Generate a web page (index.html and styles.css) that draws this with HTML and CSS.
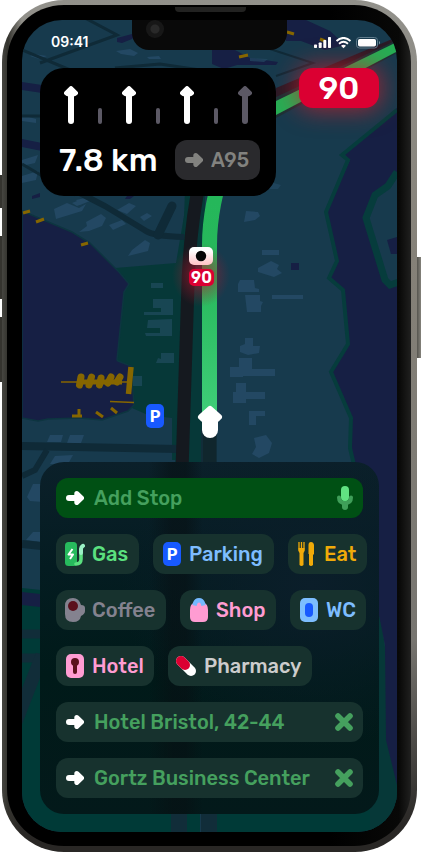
FILE: index.html
```html
<!DOCTYPE html>
<html lang="en">
<head>
<meta charset="utf-8">
<title>Navigation</title>
<link rel="stylesheet" href="styles.css">
</head>
<body>
<svg class="defs" width="0" height="0">
  <symbol id="go" viewBox="0 0 18 14"><path d="M3 7H12" stroke="currentColor" stroke-width="6" stroke-linecap="round"/><path d="M10.800 2.500L15.500 7L10.800 11.500Z" fill="currentColor" stroke="currentColor" stroke-width="5" stroke-linejoin="round"/></symbol>
  <symbol id="lane" viewBox="0 0 14 38"><path d="M7 5V35" stroke="currentColor" stroke-width="6" stroke-linecap="round"/><path d="M7 2.300L11.800 7L10.500 8H3.500L2.200 7Z" fill="currentColor" stroke="currentColor" stroke-width="4.400" stroke-linejoin="round"/></symbol>
  <symbol id="close" viewBox="0 0 18 18"><path d="M3 3L15 15M15 3L3 15" stroke="currentColor" stroke-width="5.600" stroke-linecap="round"/></symbol>
</svg>
<div class="device">
  <i class="key mute"></i><i class="key up"></i><i class="key down"></i><i class="key power"></i>
  <div class="bezel">
    <i class="speaker"></i>
    <main class="screen">
      <svg class="map" viewBox="22 20 375 812" width="375" height="812">
        <defs>
          <linearGradient id="route" gradientUnits="userSpaceOnUse" x1="0" y1="200" x2="0" y2="420"><stop offset="0" stop-color="#25b75a"/><stop offset=".35" stop-color="#27b85c"/><stop offset="1" stop-color="#40cf79"/></linearGradient>
          <radialGradient id="glow"><stop offset="0" stop-color="#d20b2e" stop-opacity=".75"/><stop offset=".45" stop-color="#b0182e" stop-opacity=".4"/><stop offset="1" stop-color="#8a2030" stop-opacity="0"/></radialGradient>
          <linearGradient id="cam" x1="0" y1="0" x2="0" y2="1"><stop offset=".2" stop-color="#fff"/><stop offset="1" stop-color="#ffc1c4"/></linearGradient>
        </defs>
        <rect x="22" y="20" width="375" height="812" fill="#173a4d"/>
        <!-- parks -->
        <path d="M115 268L176 263L190 180L202 180L206 460H172V418L148 415L132 408L110 400Z" fill="#063838"/>
        <path d="M185 190h20v280h-30z" fill="#063838"/>
        <path d="M22 588L60 592L200 600V832H22Z" fill="#003a37"/>
        <path d="M215 832V640H380L397 780V832Z" fill="#003a37"/>
        <path d="M378 600L384 640L388 670V740L397 780V832H370V600Z" fill="#063838"/>
        <!-- bay -->
        <path d="M22 211L72 232L90 243L119 272L129 284L124 292L117 360L118 361L131 366L134 405L128 411L102 420L80 418L48 419L38 421L22 418Z" fill="#161f44" stroke="#0d3540" stroke-width="1.5"/>
        <!-- eastern river -->
        <path d="M397 108L344 154L350 160L326 212L338 261L329 278L344 291L349 344L331 372L352 418L351 448L365 500L376 600L385 645L386 740L397 785Z" fill="#161f44"/>
        <path d="M397 110L342 155L348 160L326 212L337 261L329 278L343 290L348 344L331 372L351 418L350 448L354 465" fill="none" stroke="#063c3c" stroke-width="4"/>
        <path d="M397 172L388 188L375 195L366 218L385 281L392 285L397 283Z" fill="#173a4d"/>
        <path d="M397 172L388 186L375 195L366 218L385 280L390 285L399 282" fill="none" stroke="#063c3c" stroke-width="7"/>
        <path d="M387 240L397 237V254L391 254Z" fill="#161f44"/>
        <!-- northern water -->
        <path d="M286 20H306L330 31L345 45L325 50L301 41H286ZM212 50H235L250 58L278 62L276 65L237 65L224 69L212 64ZM22 82L42 85V93L22 90ZM22 139L42 143V151L22 147ZM117 38L132 34L136 35L132 39L122 43L117 42ZM32 196L40 193V197L32 199ZM127 196H134L130 199H125ZM22 592L40 594V607L22 605ZM305 287" fill="#161f44"/>
        <rect x="291" y="263" width="8" height="7" fill="#161f44"/>
        <!-- buildings -->
        <g fill="#234863">
          <path d="M116 51l14-2 8 4-4 3-13-2zM62 41l19 3-4 2-17-2zM34 54l13 2-8 3-9-3zM147 57l12-1 2 3-12 0zM22 115l14 4 0 4-14-2zM22 160l16-5-3 8-13 3zM22 176l16-5-2 9-14 3zM54 209l13-6 12 5 7-4-4 7-13 4-13 4zM72 203l10-4 3 4-8 3zM117 210l12-7 7 3-9 8zM86 222l15-8 5 4-4 8-13 5-10 1 8-6zM109 225l13-5 4 4-13 6zM140 217l7-4 5 3-8 5zM132 250l13-10 5 3-2 8-20 5zM76 200l9-2 5 3-10 4z"/>
          <path d="M246 211l12 1 2 4-5 4-11 2zM262 250h17v5h-17zM258 268l13-7 8 4-2 4 5 4-8 4-16-5zM238 284l2-4h14l1 8 4 1v3h-21zM245 295h15v6l3 1-2 4v6h-14zM272 295h31v4h-31zM240 346l5-2v-6h8v8h7l-1 7-11 2-8-3zM230 367h9v-9h13v11h23v7h-32v1h-13zM233 392h3v-9h10v9h19v7h-19v4h-13zM249 411h16v5h-9v9h-7zM254 438l12-3 6 8-3 10-10 5-7-4 4-7z"/>
          <path d="M50 435h13l-2 7H47zM70 435h14l-3 8H67zM55 456l18-1-5 9H50z"/>
          <path d="M27 497l6-13h10v18l-13-1zM26 540l7-8h8v10z"/>
          <path d="M250 58l18 1-4 3-14-1zM266 181l15 4-3 4h-14z" opacity=".7"/>
        </g>
        <g fill="#184653"><path d="M151 283h12v5h-12zM153 299h20v16h-29v-3h17v-4h-8zM148 320l24-1v17h-26l-1-3h15v-5h-13zM161 353h13v10h-18l2-5 3 1zM133 376h9v10h-9z"/></g>
        <!-- streets -->
        <g fill="none" stroke="#0f2a37">
          <path d="M85 18L117 35L40 63M22 50L75 72M115 68L160 64L200 70" stroke-width="3"/>
          <path d="M22 116H42M22 164L75 195" stroke-width="3"/>
          <path d="M74 190L105 206L146 231Q153 236 184 237" stroke-width="6"/><path d="M158 235L172 206" stroke-width="9" stroke-linecap="round"/>
          <path d="M22 446L178 449" stroke-width="8"/><path d="M47 450L35 470L22 476" stroke-width="6"/>
          <path d="M22 544L60 548" stroke-width="8"/>
          <path d="M270 49L313 63L276 76" stroke-width="2"/>
        </g>
        <g stroke="#112d39" fill="none"><path d="M22 634H42M22 658H42" stroke-width="9"/><path d="M42 655L16 722" stroke-width="13"/><path d="M179 470V832" stroke-width="16"/><path d="M209 430V832" stroke-width="16"/></g>
        <!-- carriageways -->
        <path d="M200 180Q189 230 187.500 300L182 470" fill="none" stroke="#15191f" stroke-width="13"/>
        <path d="M276 88L397 37V44L276 98Z" fill="#2a1a26"/>
        <path d="M276 97L397 40V53L276 118Z" fill="#1c3035"/>
        <path d="M276 101L397 42V51.500L276 115Z" fill="#26ae54"/>
        <path d="M226 160Q209.500 205 209.500 245V422" fill="none" stroke="url(#route)" stroke-width="15"/>
        <path d="M203 433h13v37h-13z" fill="#10262d"/>
        <!-- piers -->
        <g fill="none" stroke="#866600"><path d="M61 382H128M110 401.500L134 402.500" stroke-width="1.600"/><path d="M131 367L128.500 394" stroke-width="5.500"/><path d="M81 377l-1.500 8M91.500 377l-2.500 8M101 378l-1.500 7M111 377l-3 6M120 377l-3 5" stroke-width="7" stroke-linecap="round"/><path d="M81 382H122" stroke-width="5"/><path d="M79 409v7M72 416h10M96 412l7 5M111 408l6 5" stroke-width="3"/><path d="M23 213l7-2M36 222l8-3M81 245l7-2M239 57l9-2M287 32l7 2M320 39l5 2" stroke-width="3"/></g>
        <ellipse cx="201" cy="275" rx="29" ry="32" fill="url(#glow)"/>
        <rect x="189" y="247" width="24" height="18" rx="5" fill="url(#cam)"/><circle cx="201" cy="256" r="5.200" fill="#050505"/>
        <rect x="189" y="269" width="25" height="17" rx="5" fill="#db0032"/><text class="pin" x="201.500" y="283" font-size="16" text-anchor="middle">90</text>
        <rect x="146" y="404" width="18" height="24" rx="5" fill="#1859ff"/><text class="pin" x="155.200" y="421.500" font-size="16" text-anchor="middle">P</text>
        <path d="M210 409L219 417L217 419H203L201 417Z" fill="#fff" stroke="#fff" stroke-width="6" stroke-linejoin="round"/><path d="M210 417V430" stroke="#fff" stroke-width="16" stroke-linecap="round"/>
      </svg>
      <div class="notch"><i class="lens"></i></div>
      <header class="status">
        <time>09:41</time>
        <svg width="67" height="12" viewBox="0 0 67 12">
          <g fill="#fff"><rect y="7.500" width="3" height="3.500" rx=".7"/><rect x="4.700" y="5.500" width="3" height="5.500" rx=".7"/><rect x="9.300" y="3" width="3" height="8" rx=".7"/><rect x="14" width="3" height="11" rx=".7"/></g>
          <g fill="none" stroke="#fff" stroke-width="1.900"><path d="M22.500 4Q29.500-2.200 36.500 4M25 6.700Q29.500 2.800 34 6.700"/></g><path d="M27 8.700Q29.500 6.900 32 8.700L29.500 11.200Z" fill="#fff"/>
          <rect x="42.500" y=".5" width="21" height="10.500" rx="3" fill="none" stroke="#5f7c8c"/><rect x="44" y="2" width="18" height="7.500" rx="1.700" fill="#fff"/><path d="M65 4q2 1.700 0 3.500z" fill="#8199a6"/>
        </svg>
      </header>
      <div class="top">
        <section class="guide">
          <div class="lanes">
            <svg><use href="#lane"/></svg><i></i><svg><use href="#lane"/></svg><i></i><svg><use href="#lane"/></svg><i></i><svg class="off"><use href="#lane"/></svg>
          </div>
          <div class="turn"><strong>7.8 km</strong><span class="exit"><svg class="go"><use href="#go"/></svg>A95</span></div>
        </section>
        <div class="limit">90</div>
      </div>
      <section class="panel">
        <div class="row search"><svg class="go"><use href="#go"/></svg><span>Add Stop</span>
          <svg class="mic" width="16" height="24" viewBox="0 0 16 24"><path d="M2 11.500Q2 17 8 17Q14 17 14 11.500" fill="none" stroke="#3f9f59" stroke-width="4" stroke-linecap="round"/><path d="M8 17V21" stroke="#3f9f59" stroke-width="6" stroke-linecap="round"/><rect x="4" width="8" height="15" rx="4" fill="#61e282"/></svg></div>
        <div class="chips">
          <div class="chip gas"><svg width="20" height="24" viewBox="0 0 20 24"><rect width="12" height="24" rx="3.500" fill="#27ba5d"/><path d="M7.500 7L3.500 12.500H8L5 17" stroke="#fff" stroke-width="2" fill="none" stroke-linejoin="round"/><path d="M11 22Q16 22 16 17V7" fill="none" stroke="#5be07f" stroke-width="3.600" stroke-linecap="round"/><path d="M16 11V7Q16 5 18 3.800" fill="none" stroke="#9af2c5" stroke-width="4" stroke-linecap="round"/></svg><span>Gas</span></div>
          <div class="chip parking"><svg width="18" height="24" viewBox="0 0 18 24"><rect width="18" height="24" rx="5" fill="#1859ff"/><text class="pin" x="9.200" y="17.500" font-size="16" text-anchor="middle">P</text></svg><span>Parking</span></div>
          <div class="chip eat"><svg width="18" height="24" viewBox="0 0 18 24"><path d="M1 0V7Q1 10 3.500 10Q6 10 6 7V0M3.500 0V8" fill="none" stroke="#f0aa09" stroke-width="1.300"/><path d="M.5 6h6V9L5.500 11V23q-2 2-4 0V11L.5 9ZM10.500 3q0-3 2.500-3t3 3v9l-1 1v10q-2 2-4 0V12h-.5z" fill="#f0aa09"/></svg><span>Eat</span></div>
        </div>
        <div class="chips">
          <div class="chip coffee"><svg width="20" height="24" viewBox="0 0 20 24"><path d="M0 8Q0 0 8 0Q14 0 16 7Q20 7 20 10V13Q20 16 16 18Q15 24 8 24Q0 24 0 16Z" fill="#84828f"/><circle cx="8" cy="8" r="5" fill="#5b101c"/></svg><span>Coffee</span></div>
          <div class="chip shop"><svg width="18" height="24" viewBox="0 0 18 24"><path d="M0 12Q0 6 4 5H14Q18 6 18 12V19Q18 24 13 24H5Q0 24 0 19Z" fill="#ff9cd2"/><path d="M4.500 7.500L5 5.500Q6 2.300 9 2.300Q12 2.300 13 5.500L13.500 7.500" fill="#ff9cd2" stroke="#75b9ff" stroke-width="4.400"/></svg><span>Shop</span></div>
          <div class="chip wc"><svg width="18" height="24" viewBox="0 0 18 24"><rect width="18" height="24" rx="5" fill="#7dbdff"/><rect x="5" y="5" width="8" height="14" rx="4" fill="#1859ff"/></svg><span>WC</span></div>
        </div>
        <div class="chips">
          <div class="chip hotel"><svg width="18" height="24" viewBox="0 0 18 24"><rect width="18" height="24" rx="5" fill="#ff9cd2"/><circle cx="9" cy="8" r="4" fill="#5b101c"/><path d="M9 8V18" stroke="#5b101c" stroke-width="4" stroke-linecap="round"/></svg><span>Hotel</span></div>
          <div class="chip pharmacy"><svg width="22" height="24" viewBox="0 0 22 24"><path d="M6 7L16 17" stroke="#fff" stroke-width="10" stroke-linecap="round"/><path d="M6 7L10 11" stroke="#db0032" stroke-width="10" stroke-linecap="round"/></svg><span>Pharmacy</span></div>
        </div>
        <div class="row"><svg class="go"><use href="#go"/></svg><span>Hotel Bristol, 42-44</span><svg class="close"><use href="#close"/></svg></div>
        <div class="row"><svg class="go"><use href="#go"/></svg><span>Gortz Business Center</span><svg class="close"><use href="#close"/></svg></div>
      </section>
    </main>
  </div>
</div>
</body>
</html>
```
FILE: styles.css
```css
* { box-sizing: border-box; }
body { margin: 0; background: #fff; overflow: hidden; font: 500 20px/24px Rubik, Roboto, "Liberation Sans", sans-serif; }
svg { display: block; flex: none; }
.defs { position: absolute; }
.device { position: relative; width: 415px; height: 852px; margin-left: 2px; padding: 5px 6px 6px 5px; border-radius: 62px; background: linear-gradient(90deg, #464641 0, #33322d 6px, transparent 20px), linear-gradient(180deg, #92918b 0, #858178 30%, #777570 75%, #292725 97%); }
.key { position: absolute; background: #35342f; left: -2px; width: 2px; }
.mute { top: 175px; height: 33px; }
.up { top: 236px; height: 63px; }
.down { top: 317px; height: 65px; }
.power { left: auto; right: -4px; width: 4px; top: 257px; height: 101px; background: linear-gradient(90deg, #55544e, #85837c); }
.bezel { position: relative; height: 841px; padding: 15px 14px 9px 15px; border-radius: 57px; background: linear-gradient(90deg, #000 80%, #080807 97%, #20201f); }
.speaker { position: absolute; left: 168px; top: 2px; width: 71px; height: 5px; border-radius: 0 0 4px 4px; background: #222221; }
.screen { position: relative; width: 375px; height: 812px; border-radius: 40px; overflow: hidden; display: flex; flex-direction: column; }
.map { position: absolute; inset: 0; }
.pin { fill: #fff; font-family: Rubik, Roboto, sans-serif; font-weight: 600; }
.notch { position: absolute; left: 110px; top: 0; width: 155px; height: 30px; border-radius: 0 0 17px 17px; background: #090909; }
.lens { display: block; width: 18px; height: 18px; border-radius: 50%; margin: 0 0 0 14px; background: radial-gradient(circle, #292929 0 4px, #171717 5px 9px); }
.status { position: relative; display: flex; justify-content: space-between; align-items: center; height: 48px; padding: 0 16px 4px 29px; color: #fff; font: 600 14px/16px Inter, sans-serif; }
.status svg { margin-top: 1px; }
.top { position: relative; display: flex; justify-content: space-between; align-items: flex-start; padding: 0 18px; }
.guide { width: 236px; height: 128px; padding: 18px 16px 16px 19px; border-radius: 24px; background: #000; }
.lanes { display: flex; align-items: flex-end; gap: 20px; padding-left: 5px; color: #fff; }
.lanes svg { width: 14px; height: 38px; }
.lanes i { width: 4px; height: 16px; border-radius: 2px; background: #5c5965; }
.lanes .off { color: #5c5965; }
.turn { display: flex; justify-content: space-between; margin-top: 16px; color: #fff; }
.turn strong { font-size: 32px; line-height: 41px; font-weight: 500; }
.exit { display: flex; align-items: center; gap: 8px; width: 85px; height: 40px; padding-left: 10px; border-radius: 12px; background: #2a2a2d; color: #82827f; }
.go { width: 18px; height: 14px; }
.limit { width: 80px; height: 40px; border-radius: 14px; background: #db0032; color: #fff; text-align: center; font-size: 32px; line-height: 41px; box-shadow: 0 0 24px 2px #ce202dbb; }
.panel { position: relative; display: flex; flex-direction: column; gap: 16px; margin: auto 18px 18px; height: 352px; padding: 16px; border-radius: 24px; background: linear-gradient(90deg, transparent 32%, #07101399 39%, #07101399 43%, transparent 48%), radial-gradient(ellipse at 80% 35%, #0b1e2a, transparent 50%), linear-gradient(180deg, #0b202a 0, #041c21 30%, #001a19 60%, #03191a 100%); }
.row { display: flex; align-items: center; height: 40px; padding: 0 10px; border-radius: 12px; background: #17322e; color: #45a05e; }
.row .go { color: #fff; margin-right: 10px; }
.search { background: #005014; }
.search .mic, .close { margin-left: auto; }
.close { width: 18px; height: 18px; }
.chips { display: flex; gap: 14px; margin-right: -10px; }
.chip { display: flex; align-items: center; gap: 8px; flex: none; height: 40px; padding-left: 10px; border-radius: 12px; background: #17322e; white-space: nowrap; }
.gas { width: 83px; padding-left: 9px; gap: 7px; color: #5be07f; }
.parking { width: 121px; color: #7dbdff; }
.eat { width: 79px; color: #f0aa09; }
.coffee { width: 110px; padding-left: 9px; gap: 7px; color: #84828f; }
.shop { width: 96px; color: #ff9cd2; }
.wc { width: 76px; color: #7dbdff; }
.hotel { width: 98px; color: #ff9cd2; }
.pharmacy { width: 144px; padding-left: 7px; gap: 7px; color: #ccc; }
```
